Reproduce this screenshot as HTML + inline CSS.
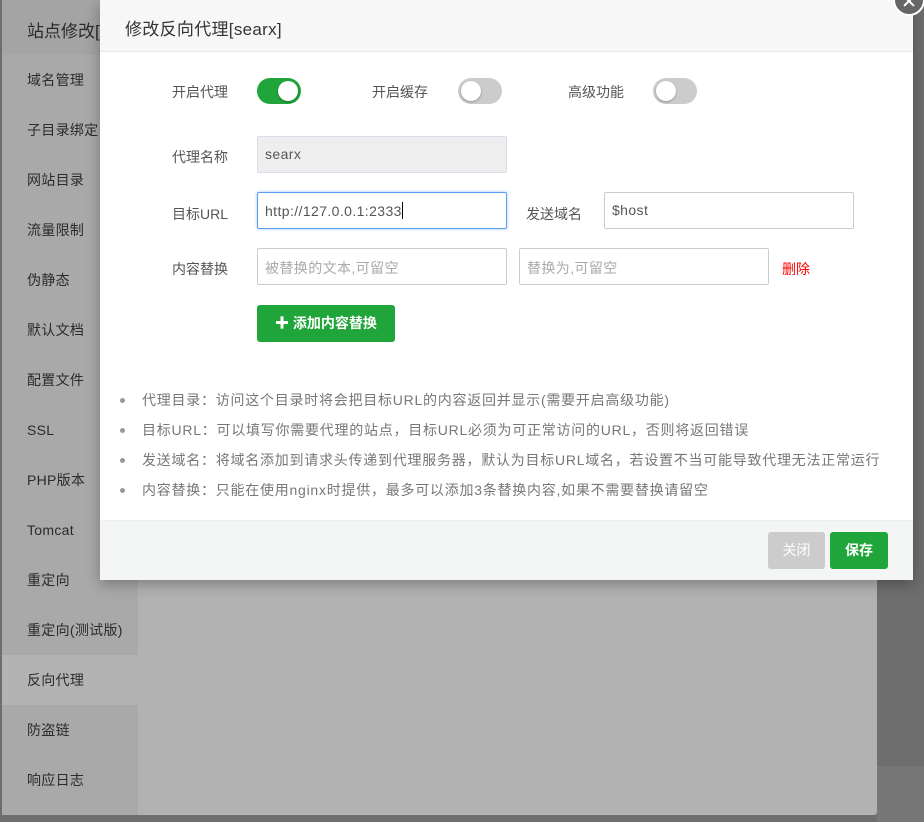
<!DOCTYPE html>
<html><head><meta charset="utf-8"><style>
*{box-sizing:border-box;margin:0;padding:0}
body{width:924px;height:822px;overflow:hidden;background:#6e6e6e;font-family:"Liberation Sans","Noto Sans CJK SC",sans-serif;position:relative}
.outer{position:absolute;left:877px;top:766px;width:47px;height:56px;background:#777}
.panel{position:absolute;left:2px;top:0;width:875px;height:815px;background:#b2b2b2;border-radius:0 0 3px 3px}
.ph{position:absolute;left:0;top:0;width:875px;height:55px;background:#a4a4a4;font-size:17px;color:#2b2b2b;padding:17px 0 0 25px}
.side{position:absolute;left:0;top:55px;width:136px;height:760px;background:#a9a9a9}
.side div{height:50px;line-height:50px;padding-left:25px;font-size:14px;color:#2b2b2b;letter-spacing:.3px}
.side .act{background:#b3b3b3}
.modal{position:absolute;left:100px;top:0;width:813px;height:580px;background:#fff;box-shadow:0 4px 14px rgba(0,0,0,.3)}
.mh{height:52px;background:#f7f7f7;border-bottom:1px solid #e8e8e8;font-size:17px;color:#333;padding:15px 0 0 25px;letter-spacing:.3px}
.close{position:absolute;left:893px;top:-16px;width:32px;height:32px;border-radius:50%;background:#666;border:2px solid #fff}
.close:before,.close:after{content:"";position:absolute;left:13px;top:8px;width:2px;height:14px;background:#fff;transform:rotate(45deg)}
.close:after{transform:rotate(-45deg)}
.lbl{position:absolute;font-size:14px;color:#555}
.sw{position:absolute;width:44px;height:26px;border-radius:13px;background:#ccc}
.sw i{position:absolute;top:3px;left:3px;width:20px;height:20px;border-radius:50%;background:#fff;box-shadow:0 1px 2px rgba(0,0,0,.3)}
.sw.on{background:#20a53a}.sw.on i{left:21px}
.in{position:absolute;height:37px;border:1px solid #ccc;border-radius:2px;font-size:14px;color:#555;padding:9px 0 0 7px;background:#fff;letter-spacing:.4px}
.ph2{color:#aaa}
.btn{position:absolute;border-radius:3px;color:#fff;font-size:14px;text-align:center}
ul{position:absolute;left:42px;top:390px;font-size:14px;color:#777;list-style:none;letter-spacing:.75px;white-space:nowrap}
ul li{height:30px;position:relative;padding-left:0}
ul li:before{content:"";position:absolute;left:-22px;top:8px;width:5px;height:5px;border-radius:50%;background:#999}
.mf{position:absolute;left:0;top:520px;width:813px;height:60px;background:#f4f6f5;border-top:1px solid #eee}
</style></head><body>
<div class="outer"></div>
<div class="panel">
<div class="ph">站点修改[</div>
<div class="side">
<div>域名管理</div><div>子目录绑定</div><div>网站目录</div><div>流量限制</div><div>伪静态</div><div>默认文档</div><div>配置文件</div><div>SSL</div><div>PHP版本</div><div>Tomcat</div><div>重定向</div><div>重定向(测试版)</div><div class="act">反向代理</div><div>防盗链</div><div>响应日志</div>
</div>
</div>
<div class="modal">
<div class="mh">修改反向代理[searx]</div>
<div class="lbl" style="left:72px;top:82px">开启代理</div>
<div class="sw on" style="left:157px;top:78px"><i></i></div>
<div class="lbl" style="left:272px;top:82px">开启缓存</div>
<div class="sw" style="left:358px;top:78px"><i></i></div>
<div class="lbl" style="left:468px;top:82px">高级功能</div>
<div class="sw" style="left:553px;top:78px"><i></i></div>
<div class="lbl" style="left:72px;top:147px">代理名称</div>
<div class="in" style="left:157px;top:136px;width:250px;background:#eee;border-color:#dcdcea">searx</div>
<div class="lbl" style="left:72px;top:204px">目标URL</div>
<div class="in" style="left:157px;top:192px;width:250px;border-color:#5b9cf5;box-shadow:0 0 3px #a9c8f5">http://127.0.0.1:2333<span style="display:inline-block;width:1px;height:17px;background:#000;vertical-align:-3px"></span></div>
<div class="lbl" style="left:426px;top:204px">发送域名</div>
<div class="in" style="left:504px;top:192px;width:250px">$host</div>
<div class="lbl" style="left:72px;top:259px">内容替换</div>
<div class="in ph2" style="left:157px;top:248px;width:250px">被替换的文本,可留空</div>
<div class="in ph2" style="left:419px;top:248px;width:250px">替换为,可留空</div>
<div class="lbl" style="left:682px;top:259px;color:#f00">删除</div>
<div class="btn" style="left:157px;top:305px;width:138px;height:37px;line-height:37px;background:#20a53a;font-weight:bold">✚ 添加内容替换</div>
<ul>
<li>代理目录：访问这个目录时将会把目标URL的内容返回并显示(需要开启高级功能)</li>
<li>目标URL：可以填写你需要代理的站点，目标URL必须为可正常访问的URL，否则将返回错误</li>
<li>发送域名：将域名添加到请求头传递到代理服务器，默认为目标URL域名，若设置不当可能导致代理无法正常运行</li>
<li>内容替换：只能在使用nginx时提供，最多可以添加3条替换内容,如果不需要替换请留空</li>
</ul>
<div class="mf">
<div class="btn" style="left:668px;top:11px;width:57px;height:37px;line-height:37px;background:#ccc">关闭</div>
<div class="btn" style="left:730px;top:11px;width:58px;height:37px;line-height:37px;background:#20a53a;font-weight:bold">保存</div>
</div>
</div>
<div class="close"></div>
</body></html>
